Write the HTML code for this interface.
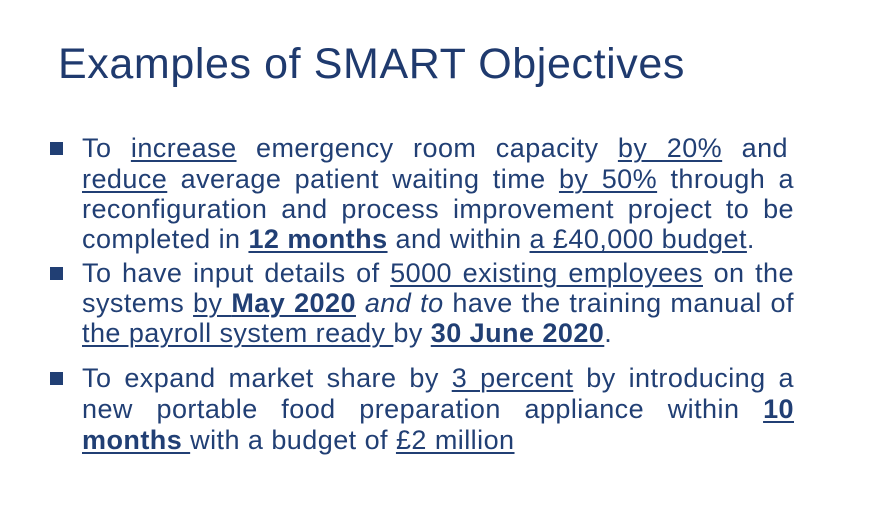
<!DOCTYPE html>
<html><head><meta charset="utf-8"><style>
body{margin:0;width:872px;height:516px;background:#fff;overflow:hidden;position:relative;font-family:"Liberation Sans",Arial,sans-serif;color:#213f74}
.t{position:absolute;left:58px;top:40px;font-size:43px;letter-spacing:0.6px;color:#1f3a6e;white-space:nowrap}
.l{position:absolute;left:82px;width:712px;font-size:27px;letter-spacing:0.45px;line-height:30px;white-space:nowrap}
.j{text-align:justify;text-align-last:justify}
.b{position:absolute;left:50px;width:13px;height:13px;background:#213f74}
u{text-decoration-thickness:2px;text-underline-offset:3px}
</style></head><body>
<div class="t">Examples of SMART Objectives</div>
<div class="b" style="top:142px"></div>
<div class="l j" style="top:133px;width:706px">To <u>increase</u> emergency room capacity <u>by 20%</u> and</div>
<div class="l j" style="top:164px"><u>reduce</u> average patient waiting time <u>by 50%</u> through a</div>
<div class="l j" style="top:194px">reconfiguration and process improvement project to be</div>
<div class="l" style="top:224px">completed in <u><b>12 months</b></u> and within <u>a £40,000 budget</u>.</div>
<div class="b" style="top:267px"></div>
<div class="l j" style="top:258px">To have input details of <u>5000 existing employees</u> on the</div>
<div class="l j" style="top:288px">systems <u>by <b>May 2020</b></u> <i>and to</i> have the training manual of</div>
<div class="l" style="top:318px"><u>the payroll system ready </u>by <u><b>30 June 2020</b></u>.</div>
<div class="b" style="top:372px"></div>
<div class="l j" style="top:363px">To expand market share by <u>3 percent</u> by introducing a</div>
<div class="l j" style="top:394px">new portable food preparation appliance within <u><b>10</b></u></div>
<div class="l" style="top:425px"><u><b>months </b></u>with a budget of <u>£2 million</u></div>
</body></html>
